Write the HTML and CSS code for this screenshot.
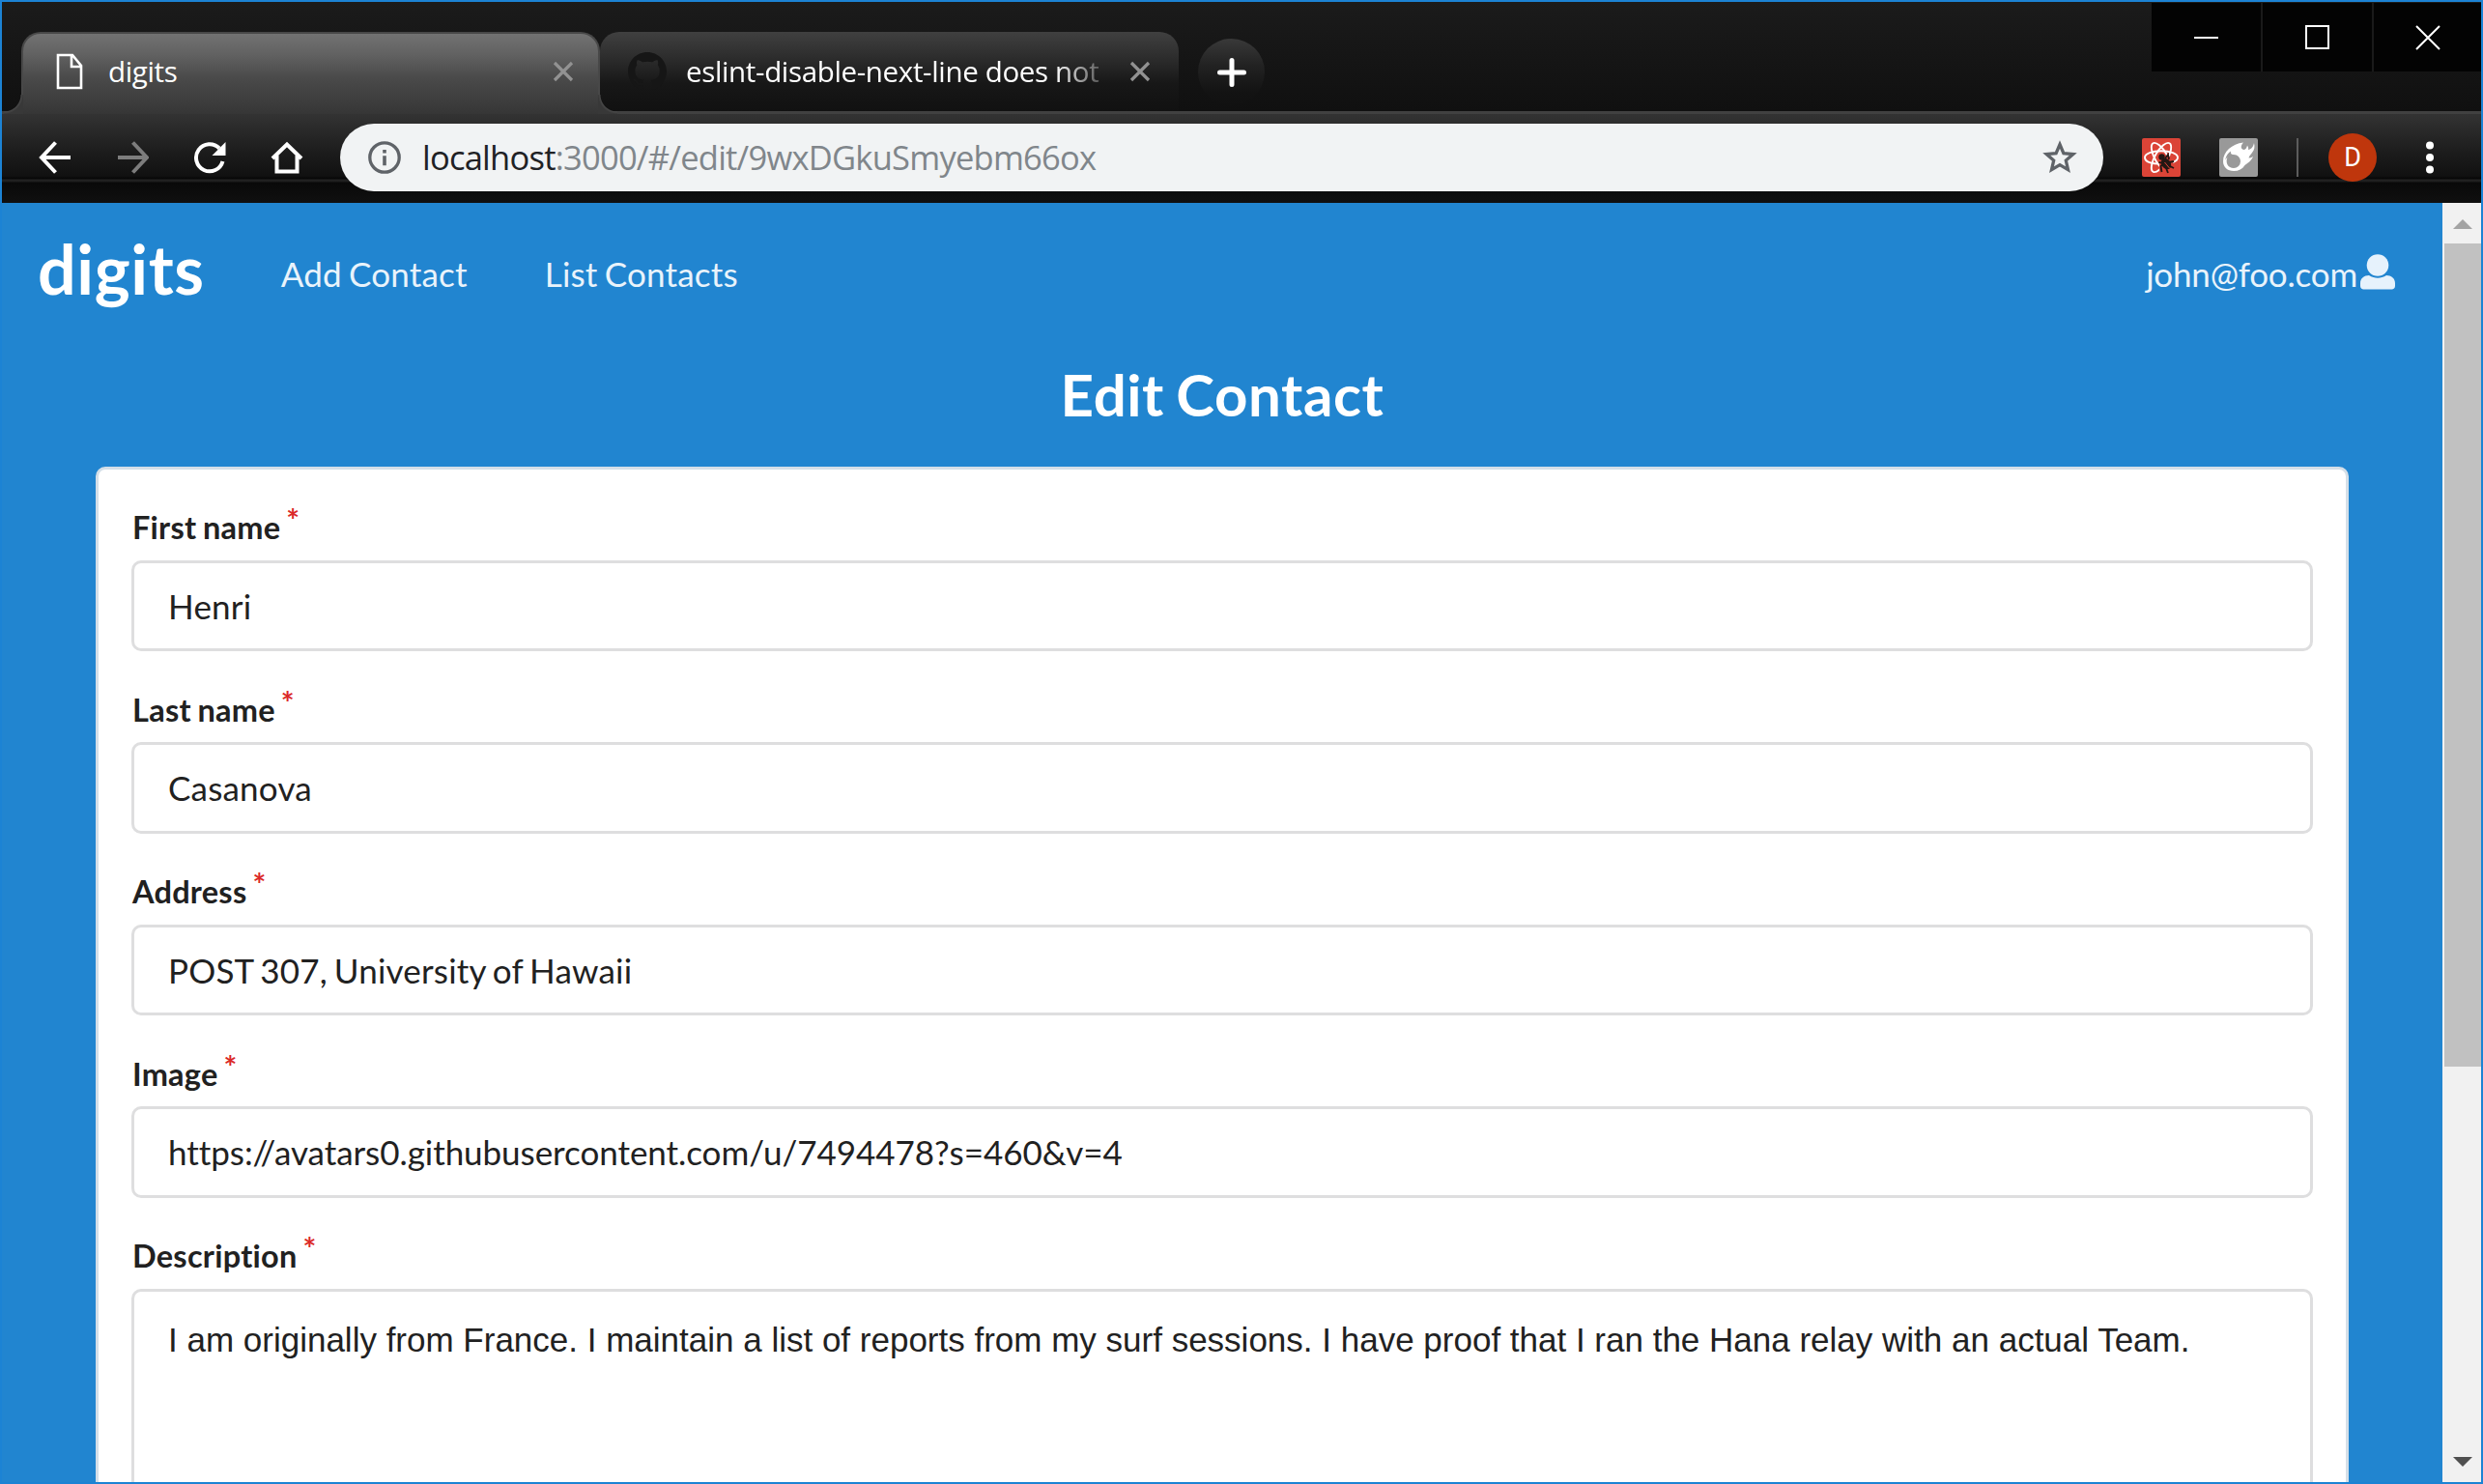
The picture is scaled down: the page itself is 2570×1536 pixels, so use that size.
FILE: index.html
```html
<!DOCTYPE html>
<html lang="en">
<head>
<meta charset="utf-8">
<title>digits</title>
<link rel="stylesheet" href="styles.css">
</head>
<body>
<div class="window">
  <header class="chrome">
    <div class="tabstrip">
      <div class="tab tab-active">
        <svg class="tab-icon" width="28" height="38" viewBox="0 0 28 38"><path d="M2 2h15l9 11v23H2z M16 2v12h10" fill="none" stroke="#fff" stroke-width="2.6"/></svg>
        <span class="tab-title">digits</span>
        <svg class="tab-close" width="22" height="22" viewBox="0 0 22 22"><path d="M2 2l18 18M20 2L2 20" stroke="#929292" stroke-width="3.2"/></svg>
      </div>
      <div class="tab tab-idle">
        <svg class="tab-icon" width="40" height="40" viewBox="0 0 16 16"><path fill="#161616" d="M8 0C3.58 0 0 3.58 0 8c0 3.54 2.29 6.53 5.47 7.59.4.07.55-.17.55-.38v-1.49c-2.01.37-2.53-.49-2.69-.94-.09-.23-.48-.94-.82-1.13-.28-.15-.68-.52-.01-.53.63-.01 1.08.58 1.23.82.72 1.21 1.87.87 2.33.66.07-.52.28-.87.51-1.07-1.78-.2-3.64-.89-3.64-3.95 0-.87.31-1.59.82-2.15-.08-.2-.36-1.02.08-2.12 0 0 .67-.21 2.2.82a7.6 7.6 0 0 1 4 0c1.53-1.04 2.2-.82 2.2-.82.44 1.1.16 1.92.08 2.12.51.56.82 1.27.82 2.15 0 3.07-1.87 3.75-3.65 3.95.29.25.54.73.54 1.48v2.2c0 .21.15.46.55.38A8.01 8.01 0 0 0 16 8c0-4.42-3.58-8-8-8z"/></svg>
        <span class="tab-title tab-title-long">eslint-disable-next-line does not</span>
        <svg class="tab-close" width="22" height="22" viewBox="0 0 22 22"><path d="M2 2l18 18M20 2L2 20" stroke="#929292" stroke-width="3.2"/></svg>
      </div>
      <div class="new-tab"><svg width="32" height="32" viewBox="0 0 32 32"><path d="M16 3.500v25M3.500 16h25" stroke="#fff" stroke-width="5" stroke-linecap="round"/></svg></div>
      <div class="win-buttons">
        <div class="win-btn"><svg width="26" height="26" viewBox="0 0 26 26"><path d="M0 13h25" stroke="#fff" stroke-width="2"/></svg></div>
        <div class="win-btn"><svg width="26" height="26" viewBox="0 0 26 26"><path d="M1 1h23v23H1z" fill="none" stroke="#fff" stroke-width="2"/></svg></div>
        <div class="win-btn win-btn-close"><svg width="26" height="26" viewBox="0 0 26 26"><path d="M1 1l24 24M25 1L1 25" stroke="#fff" stroke-width="2"/></svg></div>
      </div>
    </div>
    <div class="toolbar">
      <div class="nav-icons">
        <svg width="34" height="34" viewBox="0 0 34 34"><path d="M33 17H4M17.500 1.500L3 17l14.500 15.500" fill="none" stroke="#fff" stroke-width="4"/></svg>
        <svg width="34" height="34" viewBox="0 0 34 34"><path d="M2 17h29M17.500 1.500L32 17 17.500 32.500" fill="none" stroke="#7d7d7d" stroke-width="4"/></svg>
        <svg width="34" height="34" viewBox="0 0 34 34"><path d="M27 7.500A14 14 0 1 0 30.500 21" fill="none" stroke="#fff" stroke-width="4"/><path d="M33.500 1v14h-14z" fill="#fff"/></svg>
        <svg width="34" height="34" viewBox="0 0 34 34"><path d="M2 18L17 3.500 32 18M6.500 15v16.500h21V15" fill="none" stroke="#fff" stroke-width="4"/></svg>
      </div>
      <div class="omnibox">
        <svg width="34" height="34" viewBox="0 0 34 34"><circle cx="17" cy="17" r="15.200" fill="none" stroke="#5f6368" stroke-width="3.300"/><path d="M17 9v3.600M17 15.200v10" stroke="#5f6368" stroke-width="3.600"/></svg>
        <span class="url"><b>localhost</b>:3000/#/edit/9wxDGkuSmyebm66ox</span>
        <svg class="star" width="38" height="38" viewBox="0 0 38 38"><path d="M19 5.500l3.900 9.100 9.900.9-7.500 6.500 2.200 9.700-8.500-5.100-8.500 5.100 2.200-9.700-7.500-6.500 9.900-.9z" fill="none" stroke="#5f6368" stroke-width="3.300"/></svg>
      </div>
      <div class="extensions">
        <svg width="40" height="40" viewBox="0 0 40 40">
          <clipPath id="orbits"><path d="M0 0h40v19H21l-3 7v14H0z"/></clipPath>
          <rect width="40" height="40" rx="2" fill="#db4437"/>
          <g fill="none" stroke="#fff" stroke-width="1.900"><path d="M16 26.500C8 26 3 23.500 3 20c0-4 7.600-6.800 17-6.800S37 16 37 20c0 2-2 4-5 5"/><g clip-path="url(#orbits)"><ellipse cx="20" cy="20" rx="17" ry="6.500" transform="rotate(60 20 20)"/><ellipse cx="20" cy="20" rx="17" ry="6.500" transform="rotate(-60 20 20)"/></g></g>
          <g fill="#231713"><circle cx="20.500" cy="19.500" r="3.200"/><ellipse cx="25" cy="26.500" rx="4.600" ry="6.200" transform="rotate(-35 25 26.500)"/></g>
          <path d="M17.500 25l5 1-3 3 1 6M25 31l2 5M24 21l3-4 1 5M28 25l5-1M29 29l4 2" fill="none" stroke="#231713" stroke-width="1.800"/>
          <path d="M23.500 25l5 6" stroke="#db4437" stroke-width="1"/>
        </svg>
        <svg width="40" height="40" viewBox="0 0 40 40"><rect width="40" height="40" rx="2" fill="#999"/><path fill="#fff" d="M4 24C4 14 13 6 25 4.500C22.500 7 22 10 24 11.500C27 13 28.500 10 29 7.500C30 9 30.500 10.500 30 12C33 11.500 35 9.500 36 5C37 9 36.500 12 34 15C32.500 17 31 18.500 30.500 20.500C32 20.500 33.500 20 35 19C33 24 29 26 26.500 28C24 32 20 34 15 34C8.500 34 4 30 4 24z"/><path fill="#999" d="M14 17c-2-.5-2.500-2-2-3.500-3 2-5.500 5.500-5.500 9 1-2 1.500-2.500 2-3-2.500 6 .5 11.500 6.500 11.500a7 7 0 0 0 7-7c0-4-3.500-7.500-8-7z"/></svg>
      </div>
      <div class="bar-sep"></div>
      <div class="avatar">D</div>
      <svg class="menu-dots" width="8" height="34" viewBox="0 0 8 34"><g fill="#fff"><circle cx="4" cy="4.500" r="4"/><circle cx="4" cy="17" r="4"/><circle cx="4" cy="29.500" r="4"/></g></svg>
    </div>
  </header>
  <div class="viewport">
    <main class="page">
      <nav class="menu">
        <a class="brand">digits</a>
        <a class="item item-add">Add Contact</a>
        <a class="item item-list">List Contacts</a>
        <a class="item item-user"><span>john@foo.com</span><svg width="36" height="37" viewBox="0 0 36 37"><g fill="#e6f2fc"><circle cx="18" cy="11.500" r="11.300"/><path d="M0 33v-3c0-5 4-8 9-8 3 2 6 2.700 9 2.700s6-.7 9-2.700c5 0 9 3 9 8v3c0 2-1.500 3.500-3.500 3.500h-29C1.500 36.500 0 35 0 33z"/></g></svg></a>
      </nav>
      <h2 class="heading">Edit Contact</h2>
      <form class="card">
        <div class="field"><label>First name<i>*</i></label><div class="input">Henri</div></div>
        <div class="field"><label>Last name<i>*</i></label><div class="input">Casanova</div></div>
        <div class="field"><label>Address<i>*</i></label><div class="input">POST 307, University of Hawaii</div></div>
        <div class="field"><label>Image<i>*</i></label><div class="input link">https://avatars0.githubusercontent.com/u/7494478?s=460&amp;v=4</div></div>
        <div class="field"><label>Description<i>*</i></label><div class="input area">I am originally from France. I maintain a list of reports from my surf sessions. I have proof that I ran the Hana relay with an actual Team.</div></div>
      </form>
    </main>
    <div class="scrollbar">
      <svg width="20" height="10" viewBox="0 0 20 10"><path d="M0 10L10 0l10 10z" fill="#a3a3a3"/></svg>
      <div class="thumb"></div>
      <svg class="down" width="20" height="10" viewBox="0 0 20 10"><path d="M0 0h20L10 10z" fill="#505050"/></svg>
    </div>
  </div>
</div>
</body>
</html>
```

FILE: styles.css
```css
* { box-sizing: border-box; }
body { margin: 0; overflow: hidden; }
svg { display: block; flex: none; }

.window {
  width: 2570px;
  height: 1536px;
  border: 2px solid #1c83d4;
  display: flex;
  flex-direction: column;
  overflow: hidden;
}

/* browser frame */
.chrome {
  height: 208px;
  flex: none;
  font-family: "Open Sans", "Noto Sans", sans-serif;
  color: #fff;
}
.tabstrip {
  height: 113px;
  padding: 31px 0 0 20px;
  display: flex;
  align-items: flex-start;
  background: linear-gradient(#1b1b1b, #101010);
}
.tab {
  height: 82px;
  display: flex;
  align-items: center;
  flex: none;
}
.tab-active {
  position: relative;
  width: 599px;
  height: 85px;
  padding: 0 25px 5px 36px;
  border: 2px solid #484848;
  border-width: 2px 2px 0;
  border-radius: 20px 20px 0 0;
  background: linear-gradient(#727272, #626262 25%, #4a4a4a 55%, #363636);
  z-index: 1;
}
.tab-active::before,
.tab-active::after {
  content: "";
  position: absolute;
  bottom: 0;
  width: 20px;
  height: 20px;
}
.tab-active::before {
  left: -20px;
  background: radial-gradient(circle at 0 0, transparent 17px, #484848 18px, #383838 20px);
}
.tab-active::after {
  right: -20px;
  background: radial-gradient(circle at 100% 0, transparent 17px, #484848 18px, #383838 20px);
}
.tab-idle {
  width: 599px;
  padding: 0 29px 0 29px;
  border-radius: 20px 20px 0 20px;
  background: linear-gradient(#404040, #282828 40%, #171717 65%, #111);
}
.tab-title {
  font-size: 29.5px;
  line-height: 40px;
  letter-spacing: -0.35px;
  white-space: nowrap;
}
.tab-active .tab-title { margin-left: 26px; }
.tab-active .tab-icon { margin-left: -2px; }
.tab-title-long {
  width: 440px;
  margin-left: 20px;
  -webkit-mask-image: linear-gradient(90deg, #000 382px, transparent 445px);
  mask-image: linear-gradient(90deg, #000 382px, transparent 445px);
}
.tab-close { margin-left: auto; }
.new-tab {
  width: 69px;
  height: 69px;
  margin: 7px 0 0 20px;
  border-radius: 50%;
  display: grid;
  place-items: center;
  background: linear-gradient(#393939, #222 40%, #131313 80%, #111);
}
.win-buttons {
  display: flex;
  gap: 2px;
  margin: -30px 0 0 auto;
  background: #1a1a1a;
}
.win-btn {
  width: 113px;
  height: 71px;
  display: grid;
  place-items: center;
  background: #030303;
}
.win-btn-close { width: 111px; }
.win-btn svg { margin-top: 1px; }

.toolbar {
  height: 95px;
  border-top: 3px solid #414141;
  padding: 0 49px 2px 38px;
  display: flex;
  align-items: center;
  background: linear-gradient(#333, #1c1c1c 40px, #111 64px, #060606 67px, #242424 68px, #1c1c1c 70px, #090909 71px, #101010);
}
.nav-icons { display: flex; gap: 46px; }
.omnibox {
  width: 1825px;
  height: 70px;
  margin-left: 38px;
  padding: 0 26px 0 29px;
  border-radius: 35px;
  display: flex;
  align-items: center;
  background: #f1f3f4;
}
.url {
  margin-left: 22px;
  font-size: 34.5px;
  line-height: 48px;
  letter-spacing: -0.76px;
  color: #80868b;
  white-space: nowrap;
}
.url b { font-weight: 400; color: #202124; }
.star { margin-left: auto; }
.extensions { display: flex; gap: 40px; margin-left: 40px; }
.bar-sep { width: 2px; height: 40px; margin-left: 40px; background: #5c5c5c; }
.avatar {
  width: 50px;
  height: 50px;
  margin-left: 31px;
  border-radius: 50%;
  background: #bf360c;
  font: 27px/50px Roboto, sans-serif;
  text-align: center;
}
.menu-dots { margin-left: 51px; }

/* page */
.viewport { flex: 1; min-height: 0; display: flex; }
.page {
  width: 2526px;
  height: 1324px;
  overflow: hidden;
  background: #2185d0;
  font-family: Lato, sans-serif;
  font-variant-ligatures: none;
  display: flex;
  flex-direction: column;
}
.menu {
  height: 150px;
  flex: none;
  display: flex;
  align-items: flex-start;
  padding: 26px 49px 0 37px;
  color: #fff;
}
.brand {
  font-size: 70px;
  line-height: 84px;
  font-weight: 700;
  letter-spacing: 0.6px;
}
.item {
  margin-top: 25px;
  font-size: 35px;
  line-height: 44px;
  letter-spacing: 0.2px;
  word-spacing: -2px;
  color: #e9f3fb;
}
.item-add { margin-left: 79px; }
.item-list { margin-left: 80px; }
.item-user {
  margin-left: auto;
  display: flex;
  gap: 3px;
  letter-spacing: -0.2px;
}
.item-user svg { margin-top: 2px; }
.heading {
  margin: 0;
  height: 123px;
  flex: none;
  padding-top: 12px;
  color: #fff;
  font-size: 60px;
  line-height: 72px;
  font-weight: 700;
  letter-spacing: 0.6px;
  word-spacing: -3px;
  text-align: center;
}
.card {
  width: 2332px;
  height: 1100px;
  flex: none;
  margin-left: 97px;
  padding: 32px 34px;
  border: 3px solid #d4dfe8;
  border-radius: 10px;
  background: #fff;
}
.field { height: 188.5px; }
.field label {
  display: flex;
  height: 61.6px;
  padding: 5px 0 0 1px;
  font-size: 32.5px;
  line-height: 46px;
  font-weight: 700;
  letter-spacing: 0.25px;
  word-spacing: -1.5px;
  color: #212121;
}
.field label i {
  margin: -7px 0 0 6px;
  font-style: normal;
  color: #db2828;
}
.input {
  height: 94.5px;
  padding: 0 35px;
  border: 3px solid #dededf;
  border-radius: 10px;
  font-size: 35px;
  line-height: 89px;
  letter-spacing: 0.2px;
  word-spacing: -2.3px;
  color: #212121;
  white-space: nowrap;
}
.link { letter-spacing: -0.05px; }
.area {
  height: 420px;
  padding-top: 27px;
  font-family: "Liberation Sans", Arial, sans-serif;
  line-height: 45px;
  letter-spacing: 0;
  word-spacing: 0;
}

.scrollbar {
  width: 40px;
  height: 1324px;
  padding: 17px 0 16px 2px;
  display: flex;
  flex-direction: column;
  align-items: center;
  background: #f1f1f1;
}
.thumb { width: 38px; height: 852px; margin-top: 15px; background: #c1c1c1; }
.down { margin-top: auto; }
```
